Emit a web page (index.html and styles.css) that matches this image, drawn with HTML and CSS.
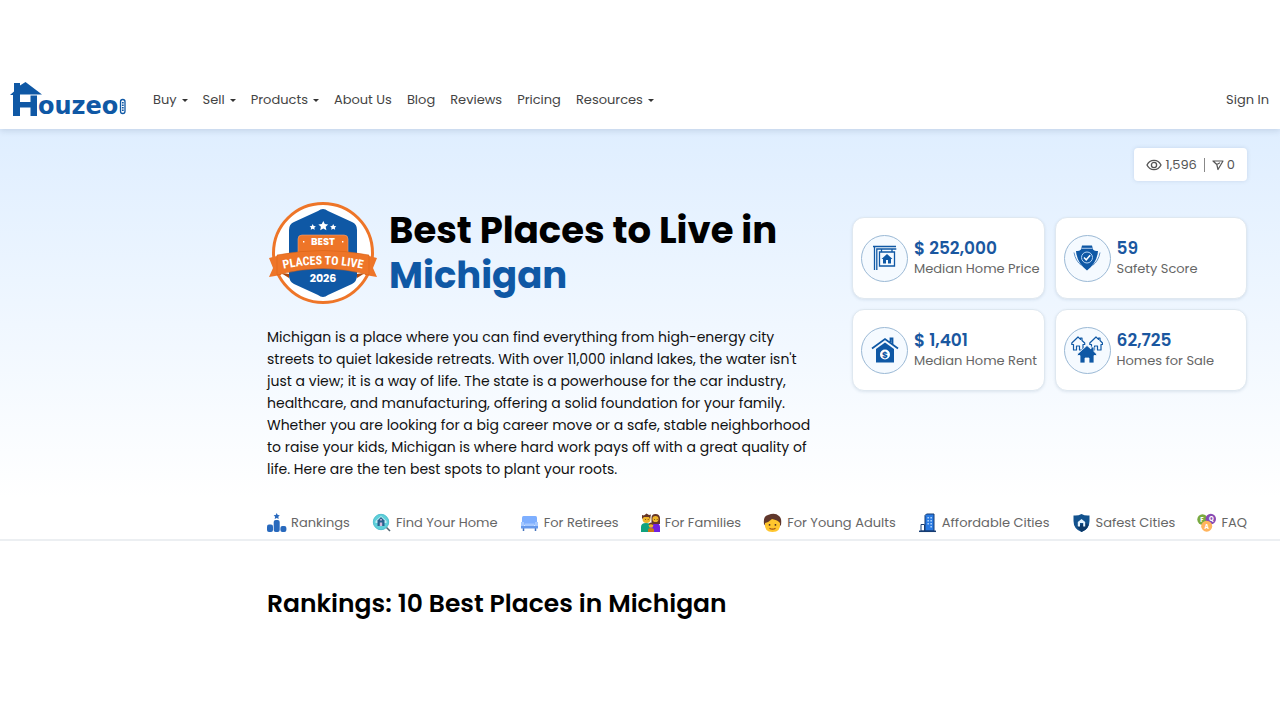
FILE: index.html
```
<!DOCTYPE html>
<html lang="en">
<head>
    <meta charset="UTF-8">
    <meta name="viewport" content="width=device-width, initial-scale=1.0">
    <title>Best Places to Live in Michigan</title>
    <link rel="stylesheet" href="styles.css">
</head>
<body>

<!-- Top navigation -->
<header class="site-header">
    <a href="#" class="logo" aria-label="Houzeo">
        <svg width="117" height="44" viewBox="0 -4 117 44">
            <path fill="#0f58a5" d="M0 13 4 9.500V1h6v2.500L15.500 0 32 12.500H10V20h10.500v-6.500H27V34h-6.500v-8.500H10V34H3V13Z"/>
            <text x="28" y="32" class="logo-text">ouzeo</text>
            <rect x="110.500" y="17.500" width="4.500" height="14" rx="2.200" fill="#fff" stroke="#0f58a5" stroke-width="1.300"/>
            <path d="M112.800 20v9" stroke="#0f58a5" stroke-width="1.800" stroke-dasharray="1.500 1"/>
        </svg>
    </a>
    <nav class="main-nav">
        <a href="#" class="has-menu">Buy</a>
        <a href="#" class="has-menu">Sell</a>
        <a href="#" class="has-menu">Products</a>
        <a href="#">About Us</a>
        <a href="#">Blog</a>
        <a href="#">Reviews</a>
        <a href="#">Pricing</a>
        <a href="#" class="has-menu">Resources</a>
    </nav>
    <a href="#" class="sign-in">Sign In</a>
</header>

<main>
    <section class="hero">
        <div class="container">
            <div class="stats-row">
                <div class="view-stats">
                    <svg width="16" height="14" viewBox="0 0 16 14" fill="none" stroke="#555" stroke-width="1.300">
                        <path d="M1 7C4 .8 12 .8 15 7 12 13.200 4 13.200 1 7Z"/>
                        <circle cx="8" cy="7" r="2.600"/>
                    </svg>
                    <span>1,596</span>
                    <span class="divider"></span>
                    <button class="share-btn" aria-label="Share">
                        <svg width="12" height="12" viewBox="0 0 12 12" fill="none" stroke="#555" stroke-width="1.200" stroke-linejoin="round">
                            <path d="M1 2h10L6 10.500 4.800 5.500ZM4.800 5.500 8 3.800"/>
                        </svg>
                        0
                    </button>
                </div>
            </div>

            <div class="hero-content">
                <div class="hero-text">
                    <div class="title-row">
                        <svg class="badge" width="111" height="104" viewBox="0 0 111 104">
                            <circle cx="55" cy="51" r="49.500" fill="#fff" stroke="#ee7528" stroke-width="3"/>
                            <path fill="#0f58a5" d="M50 9Q55 5 60 9L84 20Q89 22 89 28V74Q89 79 84 82L60 93Q55 97 50 93L26 82Q21 79 21 74V28Q21 22 26 20Z"/>
                            <path fill="#fff" d="m55.300 19 1.500 3.100 3.400.4-2.500 2.300.7 3.400-3.100-1.700-3.100 1.700.7-3.400-2.500-2.300 3.400-.4ZM44.700 22l1 2 2.100.3-1.500 1.400.4 2.100-2-1-2 1 .4-2.100-1.500-1.400 2.100-.3ZM65.200 22l1 2 2.100.3-1.500 1.400.4 2.100-2-1-2 1 .4-2.100-1.500-1.400 2.100-.3Z"/>
                            <path fill="#ee7528" stroke="#f4a06e" stroke-width=".6" d="M30 53V37q0-4 4-4h42q4 0 4 4v16Z"/>
                            <path fill="#fff" d="M35 39h1.400v1.400H35ZM74 39h1.400v1.400H74Z"/>
                            <path fill="#ee7528" d="M1 56l12-3v20L1 75l4-9ZM109 56l-12-3v20l12 2-4-9Z"/>
                            <path fill="#aa480f" d="m13 71 8 1v4ZM97 71l-8 1v4Z"/>
                            <path fill="#ee7528" stroke="#d56014" stroke-width=".5" d="M9 53Q55 44 101 53V73Q55 60 9 73Z"/>
                            <path id="ribbon" fill="none" d="M10 68Q55 57 100 68"/>
                            <text class="badge-best" x="55" y="43">BEST</text>
                            <text class="badge-ribbon"><textPath href="#ribbon" startOffset="50%">PLACES TO LIVE</textPath></text>
                            <text class="badge-year" x="55" y="80">2026</text>
                        </svg>
                        <h1>Best Places to Live in <span>Michigan</span></h1>
                    </div>
                    <p class="intro">
                        Michigan is a place where you can find everything from high-energy city<br>
                        streets to quiet lakeside retreats. With over 11,000 inland lakes, the water isn't<br>
                        just a view; it is a way of life. The state is a powerhouse for the car industry,<br>
                        healthcare, and manufacturing, offering a solid foundation for your family.<br>
                        Whether you are looking for a big career move or a safe, stable neighborhood<br>
                        to raise your kids, Michigan is where hard work pays off with a great quality of<br>
                        life. Here are the ten best spots to plant your roots.
                    </p>
                </div>

                <div class="cards">
                    <div class="card">
                        <div class="card-icon">
                            <svg width="28" height="28" viewBox="0 0 28 28" fill="none" stroke="#0f58a5" stroke-width="1.300">
                                <path d="M3.500 26V2.500H25M5.800 26V5h19.500M3.500 2.500H2M10.500 5v3M21 5v3"/>
                                <path d="M8.500 8h15v14h-15Z"/>
                                <path fill="#0f58a5" stroke="none" d="m16 10-5.500 5H12v4.500h3V16h2v3.500h3V15h1.500Z"/>
                            </svg>
                        </div>
                        <div>
                            <strong>$ 252,000</strong>
                            <span>Median Home Price</span>
                        </div>
                    </div>
                    <div class="card">
                        <div class="card-icon">
                            <svg width="28" height="28" viewBox="0 0 28 28" fill="#0f58a5">
                                <path d="M9 1.500h10l1 4q2 2 5 1.500Q24 19 14 26.500 4 19 3 7q3 .5 5-1.500Z"/>
                                <path d="M1 8.500Q2.500 17 8.500 21.500M27 8.500Q25.500 17 19.500 21.500" fill="none" stroke="#5f92c8"/>
                                <path d="M8.500 4.300h11" stroke="#d9eaff" stroke-width=".8"/>
                                <circle cx="14" cy="13.500" r="5.500" fill="none" stroke="#b5d4f5"/>
                                <path d="m11 13.500 2.200 2.300 4-4.500" fill="none" stroke="#fff" stroke-width="1.500"/>
                            </svg>
                        </div>
                        <div>
                            <strong>59</strong>
                            <span>Safety Score</span>
                        </div>
                    </div>
                    <div class="card">
                        <div class="card-icon">
                            <svg width="28" height="28" viewBox="0 0 28 28" fill="#0f58a5">
                                <path d="M1 12.500 14 3l13 9.500M19.500 6V2.500h2V8" fill="none" stroke="#0f58a5" stroke-width="1.800"/>
                                <path d="m14 6.500 9 6.500v13.500H5V13Z"/>
                                <circle cx="14" cy="18.500" r="5" fill="#fff"/>
                                <text class="coin" x="14" y="21.700">$</text>
                            </svg>
                        </div>
                        <div>
                            <strong>$ 1,401</strong>
                            <span>Median Home Rent</span>
                        </div>
                    </div>
                    <div class="card">
                        <div class="card-icon">
                            <svg width="32" height="28" viewBox="0 0 32 28">
                                <g fill="none" stroke="#0f58a5" stroke-width="1.200" stroke-linejoin="round">
                                    <path d="M7 1 .8 7v1.500H2.500V14h3v-4h3v4H12V8.500h1.700V7L11 4.500V2H9.500v1.400Z"/>
                                    <path d="M25 1 18.800 7v1.500h1.700V14h3v-4h3v4H30V8.500h1.500V7L29 4.500V2h-1.500v1.400Z"/>
                                </g>
                                <path fill="#0f58a5" stroke="#f5faff" stroke-width=".8" d="m16 9.500 4 3.500v-2h3v4.500l2.500 2.500v1.500H23V27h-5v-5h-4v5H9v-7.500H6.500V18Z"/>
                            </svg>
                        </div>
                        <div>
                            <strong>62,725</strong>
                            <span>Homes for Sale</span>
                        </div>
                    </div>
                </div>
            </div>

            <!-- Section links -->
            <nav class="tabs">
                <a href="#rankings">
                    <svg width="20" height="20" viewBox="0 0 20 20" fill="#2869bd">
                        <rect x="0" y="11.500" width="6" height="7.500" rx="2"/>
                        <rect x="6.700" y="7" width="6" height="12" rx="2"/>
                        <rect x="13.400" y="13" width="6" height="6" rx="2"/>
                        <path d="m9.700 0 1 1.900 2.100.3-1.500 1.500.4 2.200-2-1-2 1 .4-2.200-1.500-1.500 2.100-.3Z"/>
                    </svg>
                    Rankings
                </a>
                <a href="#find">
                    <svg width="20" height="20" viewBox="0 0 20 20">
                        <path d="m14 14 4 4" stroke="#4f6470" stroke-width="1.600"/>
                        <circle cx="9" cy="9" r="7.700" fill="#5fd0da" stroke="#4fc0cf" stroke-width="1"/>
                        <path fill="#bfeef5" d="M3.500 8 9 3l5.500 5v2h-11Z"/>
                        <path fill="#28628f" d="M5.500 7.500 9 4l3.500 3.500V13h-7Z"/>
                        <path fill="#d5b8dd" d="M7.800 9.500h2.400V13H7.800ZM8.200 6h1.600v1.600H8.200Z"/>
                    </svg>
                    Find Your Home
                </a>
                <a href="#retirees">
                    <svg width="20" height="20" viewBox="0 0 20 20">
                        <path d="M3.500 15v3M15.500 15v3" stroke="#4674bd" stroke-width="1.500"/>
                        <rect x="2" y="3" width="15" height="9" rx="1.500" fill="#7eafff"/>
                        <path fill="#a5c8ff" d="M4.500 10.500h10V14h-10ZM1 9h3v4h11V9h3v5H1Z"/>
                        <path fill="#6699eb" d="M1 13h17v2.500H1Z"/>
                    </svg>
                    For Retirees
                </a>
                <a href="#families">
                    <svg width="20" height="20" viewBox="0 0 20 20">
                        <path fill="#10a37f" d="M0 19v-5q0-4 5-4t5 4v5Z"/>
                        <path fill="#7020df" d="M9 19v-5q0-4 5-4t5 4v5Z"/>
                        <path fill="#643528" d="M10.500 11V5q0-4 4-4T19 5v6Z"/>
                        <circle cx="14.500" cy="6" r="3.100" fill="#edb429"/>
                        <circle cx="5.500" cy="6" r="4" fill="#edb429"/>
                        <path fill="#643528" d="M1 6V2l2 .5L5.500.5 8 2l2-.5-1 4.500L8 4H3Z"/>
                        <circle cx="10" cy="12.500" r="2.300" fill="#edb429"/>
                        <path fill="#643528" d="M7.700 12q0-2.500 2.300-2.500t2.300 2.500q-2.300-1.500-4.600 0Z"/>
                        <path fill="#c97a16" d="M7 19v-2q0-2 3-2t3 2v2Z"/>
                        <path fill="#412014" d="M4 6h.8v.8H4ZM6.800 6h.8v.8h-.8ZM13.200 6h.8v.8h-.8ZM15.800 6h.8v.8h-.8Z"/>
                    </svg>
                    For Families
                </a>
                <a href="#adults">
                    <svg width="20" height="20" viewBox="0 0 20 20">
                        <path fill="#60372c" d="M1 11Q0 3 5 2q7-3 11 1 3 2 2 9l-2 2H3Z"/>
                        <path fill="#ffc62e" d="M2 10Q1 19 9.500 19T17 10Q15 7 9 6 6 9 2 10Z"/>
                        <path fill="#57372b" d="M5.800 11h1.500v1.700H5.800ZM11.700 11h1.500v1.700h-1.500Z"/>
                        <path d="M6.500 15.200q3 2 6 0" fill="none" stroke="#a05116" stroke-width="1.200"/>
                    </svg>
                    For Young Adults
                </a>
                <a href="#affordable">
                    <svg width="20" height="20" viewBox="0 0 20 20">
                        <path fill="#2879e2" stroke="#163c72" d="M7 18V2.500L8.500 1H16v17Z"/>
                        <path fill="#fff" stroke="#163c72" d="M3 18v-6.500h3.500V18Z"/>
                        <path fill="#c8e5ff" d="M9.500 4h1.300v1.500H9.500ZM12.500 4h1.300v1.500h-1.300ZM9.500 7h1.300v1.500H9.500ZM12.500 7h1.300v1.500h-1.300ZM9.500 10h1.300v1.500H9.500ZM12.500 10h1.300v1.500h-1.300ZM12.500 13h1.300v1.500h-1.300Z"/>
                        <path d="M1 18.300h17" stroke="#163c72" stroke-width="1.500"/>
                    </svg>
                    Affordable Cities
                </a>
                <a href="#safest">
                    <svg width="20" height="20" viewBox="0 0 20 20">
                        <path fill="#12528e" d="M9.500 1q3.500 2 8 1.500V8q0 8-8 11-8-3-8-11V2.500Q6 3 9.500 1Z"/>
                        <path fill="#0b3867" d="m5 13.500 4.500 5.500q5-2 7-6.500l-3-3Z"/>
                        <path d="M5.800 13.500V9l3.700-3 3.700 3v4.500h-2V10H8v3.500Z" fill="#e5f4ff"/>
                    </svg>
                    Safest Cities
                </a>
                <a href="#faq">
                    <svg width="20" height="20" viewBox="0 0 20 20">
                        <circle cx="5.500" cy="6.500" r="5.200" fill="#79aa41"/>
                        <circle cx="13.800" cy="6" r="5.200" fill="#884bb5"/>
                        <circle cx="9.700" cy="13.200" r="5.500" fill="#ffb45d"/>
                        <g class="faq-letters">
                            <text x="5" y="8.500">F</text>
                            <text x="14.300" y="8">Q</text>
                            <text x="9.700" y="16">A</text>
                        </g>
                    </svg>
                    FAQ
                </a>
            </nav>
        </div>
    </section>

    <section class="rankings container" id="rankings">
        <h2>Rankings: 10 Best Places in Michigan</h2>
    </section>
</main>

</body>
</html>
```
FILE: styles.css
```
/* General Reset */
* {
    margin: 0;
    padding: 0;
    box-sizing: border-box;
}

body {
    font-family: Poppins, Inter, sans-serif;
    font-size: 13px;
    color: #111;
    background: #fff;
}

a {
    color: inherit;
    text-decoration: none;
}

svg {
    flex-shrink: 0;
}

/* Header */
.site-header {
    display: flex;
    align-items: center;
    padding: 78px 11px 7px 10px;
    background: #fff;
    color: #444;
    box-shadow: 0 2px 6px rgba(40, 70, 100, 0.15);
    position: relative;
    z-index: 1;
}

.logo {
    display: flex;
    margin-right: 26px;
}

.logo-text {
    font-family: "DejaVu Sans", sans-serif;
    font-weight: bold;
    font-size: 24px;
    fill: #0f58a5;
}

.main-nav {
    display: flex;
    gap: 15px;
}

.has-menu::after {
    content: "";
    display: inline-block;
    margin-left: 5px;
    vertical-align: 2px;
    border: 3px solid transparent;
    border-top-color: #333;
    border-bottom: 0;
}

.sign-in {
    margin-left: auto;
}

/* Hero */
.container {
    max-width: 980px;
    margin-left: auto;
    margin-right: 33px;
}

.hero {
    background: linear-gradient(#dfeeff, #fff 90%);
    border-bottom: 2px solid #eceff2;
}

.stats-row {
    display: flex;
    justify-content: flex-end;
    padding-top: 19px;
}

.view-stats {
    display: flex;
    align-items: center;
    gap: 3px;
    height: 33px;
    padding: 0 12px;
    background: #fff;
    border-radius: 4px;
    color: #555;
    box-shadow: 0 0 4px rgba(40, 80, 120, 0.15);
}

.divider {
    width: 1px;
    height: 14px;
    margin: 0 4px;
    background: #888;
}

.share-btn {
    display: flex;
    align-items: center;
    gap: 3px;
    border: none;
    background: none;
    font: inherit;
    color: inherit;
    cursor: pointer;
}

.hero-content {
    display: flex;
    justify-content: space-between;
    align-items: flex-start;
}

.title-row {
    display: flex;
    gap: 10px;
    padding: 21px 0 0 1px;
}

h1 {
    width: 400px;
    padding-top: 6px;
    font-size: 37px;
    line-height: 45px;
    font-weight: 700;
    color: #000;
}

h1 span {
    display: block;
    color: #0f58a5;
}

.badge text {
    fill: #fff;
    font-weight: bold;
    text-anchor: middle;
}

.badge-best {
    font-size: 10px;
}

.badge .badge-ribbon {
    font-family: "Liberation Sans Narrow", "Roboto Condensed", "Open Sans Condensed", Roboto, sans-serif;
    font-size: 12px;
}

.badge-year {
    font-size: 11px;
}

.intro {
    padding-top: 20px;
    font-size: 14px;
    line-height: 22px;
    white-space: nowrap;
}

/* Cards */
.cards {
    display: grid;
    grid-template-columns: 1fr 1fr;
    gap: 10px;
    width: 395px;
    margin-top: 36px;
}

.card {
    display: flex;
    align-items: center;
    gap: 6px;
    height: 82px;
    padding-left: 8px;
    background: #fff;
    border: 1px solid #dfe8f0;
    border-radius: 12px;
    box-shadow: 0 1px 3px rgba(40, 80, 120, 0.12);
    white-space: nowrap;
}

.card-icon {
    display: flex;
    align-items: center;
    justify-content: center;
    width: 47px;
    height: 47px;
    flex-shrink: 0;
    border: 1px solid #9bb9d5;
    border-radius: 50%;
    background: #f5faff;
}

.card strong,
.card span {
    display: block;
}

.card strong {
    font-size: 17px;
    line-height: 22px;
    font-weight: 600;
    color: #1a57a0;
}

.card span {
    line-height: 20px;
    color: #666;
}

.coin {
    font-size: 9px;
    font-weight: bold;
    text-anchor: middle;
}

/* Tabs */
.tabs {
    display: flex;
    justify-content: space-between;
    padding: 33px 0 6px;
    color: #666;
}

.tabs a {
    display: flex;
    align-items: center;
    gap: 4px;
    white-space: nowrap;
}

.faq-letters {
    font-size: 6px;
    font-weight: bold;
    fill: #fff;
    text-anchor: middle;
}

/* Rankings */
.rankings {
    padding-top: 44px;
}

h2 {
    font-size: 25px;
    line-height: 38px;
    font-weight: 600;
    color: #000;
}
```
